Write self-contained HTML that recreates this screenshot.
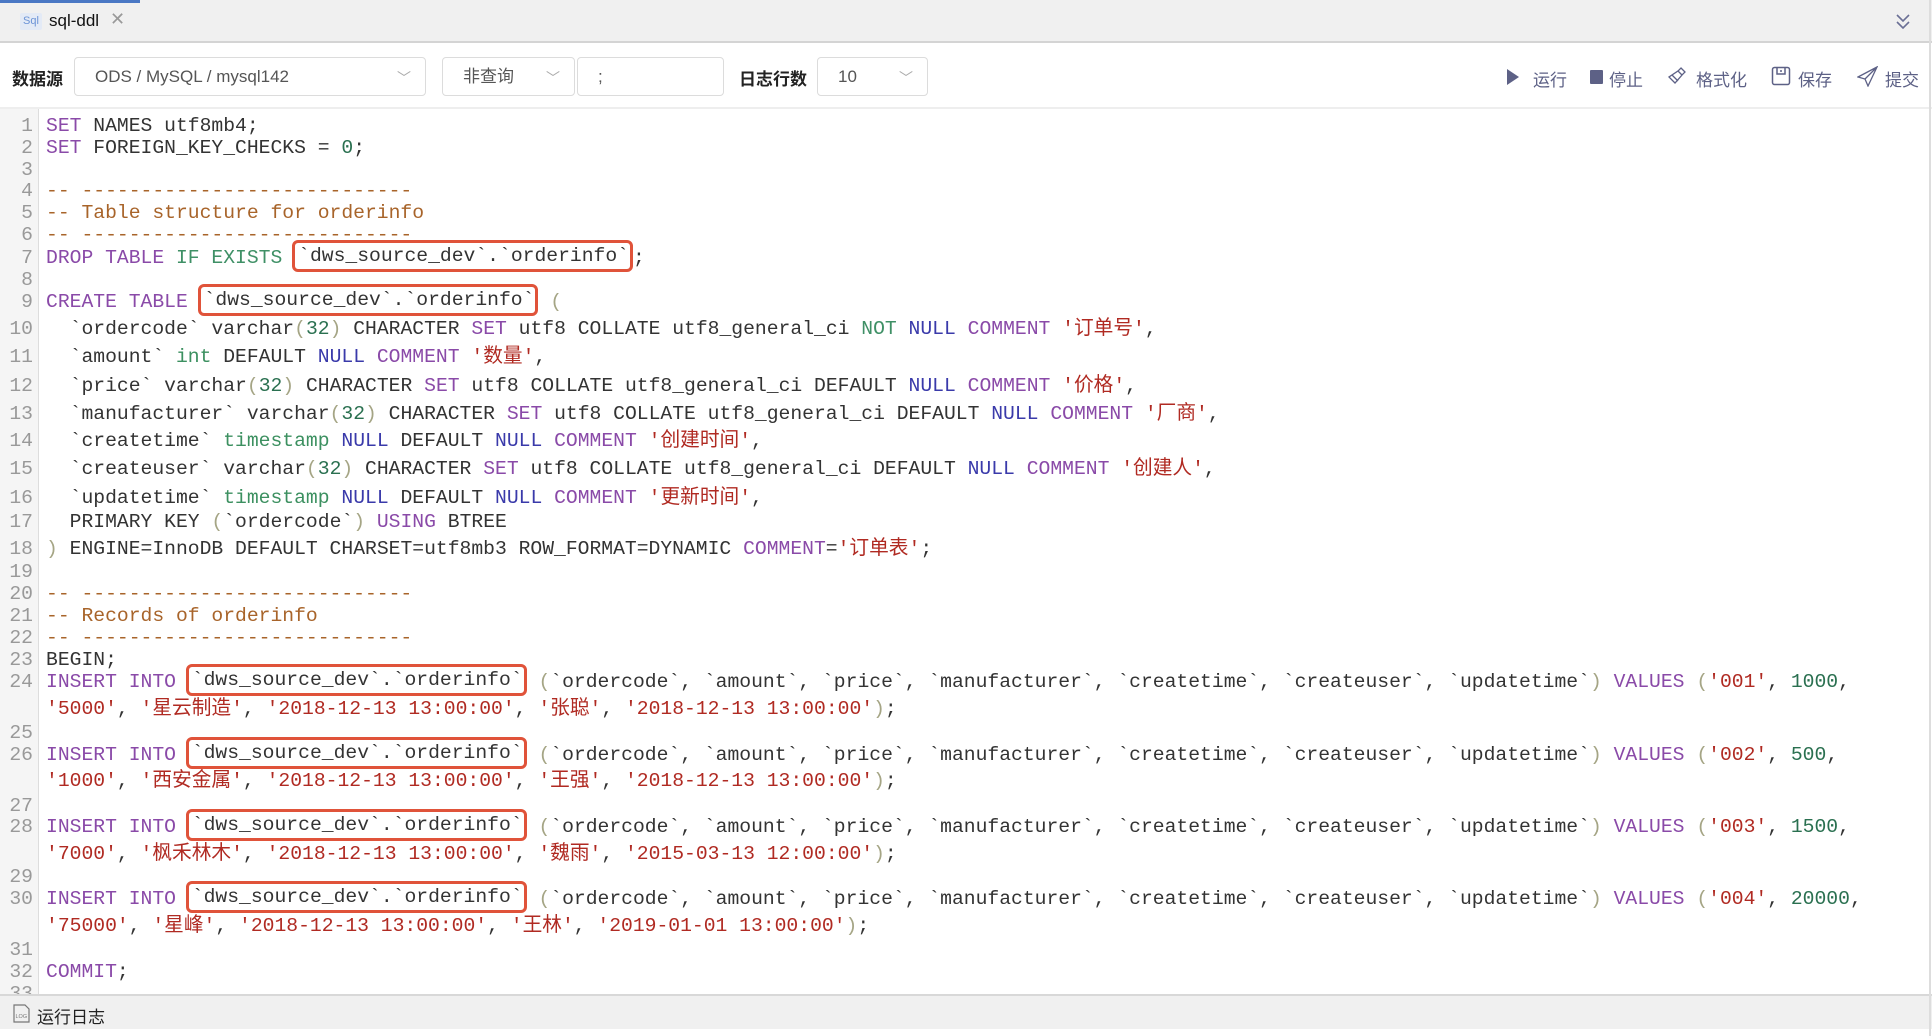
<!DOCTYPE html>
<html><head><meta charset="utf-8"><style>
*{margin:0;padding:0;box-sizing:border-box}
body{width:1932px;height:1036px;overflow:hidden;background:#fff;position:relative;font-family:"Liberation Sans","Noto Sans CJK SC",sans-serif;}
.tabbar{position:absolute;left:0;top:0;width:1932px;height:43px;background:#f0f0f0;border-bottom:2px solid #d4d4d4}
.stripe{position:absolute;left:0;top:0;width:140px;height:3px;background:#4a78c4}
.sqlic{position:absolute;left:20px;top:13px;width:22px;height:17px;background:#e3eaf6;color:#6b93d6;font-size:11px;text-align:center;line-height:17px;border-radius:2px}
.tabt{position:absolute;left:49px;top:11px;font-size:17px;color:#111}
.tabx{position:absolute;left:110px;top:9px;font-size:18px;color:#999}
.toolbar{position:absolute;left:0;top:43px;width:1932px;height:66px;border-bottom:2px solid #eee}
.lbl{position:absolute;top:22px;font-size:17px;color:#222}
.sel{position:absolute;top:14px;height:39px;border:1px solid #dcdcdc;border-radius:4px;font-size:17px;color:#555;padding-left:20px;line-height:37px}
.sel .ar{position:absolute;right:14px;top:2px;color:#aaa;font-size:14px}
.act{position:absolute;top:23px;font-size:17px;color:#5d6186}
.gut{position:absolute;left:0;top:109px;width:39px;height:885px;background:#f5f5f5;border-right:1px solid #ddd}
.code{position:absolute;left:0;top:0;width:1932px;height:994px;overflow:hidden}
.l,.n{position:absolute;height:28px;line-height:28px;font-family:"Liberation Mono","Noto Sans CJK SC",monospace;font-size:19.7px;white-space:pre;color:#333}
.l{left:46px}
.n{left:0;width:33px;text-align:right;color:#999}
.k{color:#8a4aa8}.a{color:#3a3aaa}.t{color:#3c9060}.g{color:#3f9066}.u{color:#2a7050}.s{color:#b02a22}.c{color:#a8642a}.b{color:#a5a585}
.bx{display:inline-block;border:3px solid #e0533a;border-radius:6px;padding:0 1px 0 3px;margin-left:-2px;line-height:26px;height:32px;vertical-align:middle;margin-top:-4px}
.bot{position:absolute;left:0;top:994px;width:1932px;height:35px;background:#f0f0f0;border-top:2px solid #d8d8d8}
.rline{position:absolute;left:1929px;top:0;width:2px;height:1036px;background:#ddd}
</style></head><body>
<div class="tabbar"><div class="stripe"></div><div class="sqlic">Sql</div><div class="tabt">sql-ddl</div><div class="tabx">✕</div>
<svg style="position:absolute;left:1895px;top:12px" width="16" height="20" viewBox="0 0 16 20"><path d="M2 3l6 6 6-6M2 10l6 6 6-6" fill="none" stroke="#6a6f95" stroke-width="1.6"/></svg></div>
<div class="toolbar">
<div class="lbl" style="left:12px;font-weight:bold">数据源</div>
<div class="sel" style="left:74px;width:352px">ODS / MySQL / mysql142<span class="ar">﹀</span></div>
<div class="sel" style="left:442px;width:133px">非查询<span class="ar">﹀</span></div>
<div class="sel" style="left:577px;width:147px">;</div>
<div class="lbl" style="left:739px;font-weight:bold">日志行数</div>
<div class="sel" style="left:817px;width:111px">10<span class="ar">﹀</span></div>
<svg style="position:absolute;left:1506px;top:25px" width="14" height="18"><path d="M1 1L13 9L1 17Z" fill="#5d6186"/></svg>
<div class="act" style="left:1533px">运行</div>
<div style="position:absolute;left:1590px;top:27px;width:13px;height:14px;background:#5d6186;border-radius:1px"></div>
<div class="act" style="left:1609px">停止</div>
<svg style="position:absolute;left:1667px;top:23px" width="20" height="20" viewBox="0 0 20 20"><path d="M14 2l4 4-3 3-4-4zM11 5l4 4-7 8-6-6z M5 9l6 6" fill="none" stroke="#5d6186" stroke-width="1.3"/></svg>
<div class="act" style="left:1696px">格式化</div>
<svg style="position:absolute;left:1771px;top:23px" width="20" height="20" viewBox="0 0 20 20"><rect x="1.5" y="1.5" width="17" height="17" rx="2" fill="none" stroke="#5d6186" stroke-width="1.5"/><path d="M6 2v6h8V2M10 4v2" fill="none" stroke="#5d6186" stroke-width="1.5"/></svg>
<div class="act" style="left:1798px">保存</div>
<svg style="position:absolute;left:1857px;top:23px" width="21" height="21" viewBox="0 0 21 21"><path d="M20 1L1 11l7 2 3 7zM20 1L8 13" fill="none" stroke="#5d6186" stroke-width="1.3"/></svg>
<div class="act" style="left:1885px">提交</div>
</div>
<div class="gut"></div>
<div class="code">
<div class="n" style="top:112px">1</div><div class="l" style="top:112px"><span class="k">SET</span> NAMES utf8mb4;</div>
<div class="n" style="top:134px">2</div><div class="l" style="top:134px"><span class="k">SET</span> FOREIGN_KEY_CHECKS = <span class="u">0</span>;</div>
<div class="n" style="top:156px">3</div>
<div class="n" style="top:177px">4</div><div class="l c" style="top:177px">-- ----------------------------</div>
<div class="n" style="top:199px">5</div><div class="l c" style="top:199px">-- Table structure for orderinfo</div>
<div class="n" style="top:221px">6</div><div class="l c" style="top:221px">-- ----------------------------</div>
<div class="n" style="top:244px">7</div><div class="l" style="top:244px"><span class="k">DROP TABLE</span> <span class="g">IF EXISTS</span> <span class="bx">`dws_source_dev`.`orderinfo`</span>;</div>
<div class="n" style="top:266px">8</div>
<div class="n" style="top:288px">9</div><div class="l" style="top:288px"><span class="k">CREATE TABLE</span> <span class="bx">`dws_source_dev`.`orderinfo`</span> <span class="b">(</span></div>
<div class="n" style="top:315px">10</div><div class="l" style="top:315px">  `ordercode` varchar<span class="b">(</span><span class="u">32</span><span class="b">)</span> CHARACTER <span class="k">SET</span> utf8 COLLATE utf8_general_ci <span class="g">NOT</span> <span class="a">NULL</span> <span class="k">COMMENT</span> <span class="s">'订单号'</span>,</div>
<div class="n" style="top:343px">11</div><div class="l" style="top:343px">  `amount` <span class="t">int</span> DEFAULT <span class="a">NULL</span> <span class="k">COMMENT</span> <span class="s">'数量'</span>,</div>
<div class="n" style="top:372px">12</div><div class="l" style="top:372px">  `price` varchar<span class="b">(</span><span class="u">32</span><span class="b">)</span> CHARACTER <span class="k">SET</span> utf8 COLLATE utf8_general_ci DEFAULT <span class="a">NULL</span> <span class="k">COMMENT</span> <span class="s">'价格'</span>,</div>
<div class="n" style="top:400px">13</div><div class="l" style="top:400px">  `manufacturer` varchar<span class="b">(</span><span class="u">32</span><span class="b">)</span> CHARACTER <span class="k">SET</span> utf8 COLLATE utf8_general_ci DEFAULT <span class="a">NULL</span> <span class="k">COMMENT</span> <span class="s">'厂商'</span>,</div>
<div class="n" style="top:427px">14</div><div class="l" style="top:427px">  `createtime` <span class="t">timestamp</span> <span class="a">NULL</span> DEFAULT <span class="a">NULL</span> <span class="k">COMMENT</span> <span class="s">'创建时间'</span>,</div>
<div class="n" style="top:455px">15</div><div class="l" style="top:455px">  `createuser` varchar<span class="b">(</span><span class="u">32</span><span class="b">)</span> CHARACTER <span class="k">SET</span> utf8 COLLATE utf8_general_ci DEFAULT <span class="a">NULL</span> <span class="k">COMMENT</span> <span class="s">'创建人'</span>,</div>
<div class="n" style="top:484px">16</div><div class="l" style="top:484px">  `updatetime` <span class="t">timestamp</span> <span class="a">NULL</span> DEFAULT <span class="a">NULL</span> <span class="k">COMMENT</span> <span class="s">'更新时间'</span>,</div>
<div class="n" style="top:508px">17</div><div class="l" style="top:508px">  PRIMARY KEY <span class="b">(</span>`ordercode`<span class="b">)</span> <span class="k">USING</span> BTREE</div>
<div class="n" style="top:535px">18</div><div class="l" style="top:535px"><span class="b">)</span> ENGINE=InnoDB DEFAULT CHARSET=utf8mb3 ROW_FORMAT=DYNAMIC <span class="k">COMMENT</span>=<span class="s">'订单表'</span>;</div>
<div class="n" style="top:558px">19</div>
<div class="n" style="top:580px">20</div><div class="l c" style="top:580px">-- ----------------------------</div>
<div class="n" style="top:602px">21</div><div class="l c" style="top:602px">-- Records of orderinfo</div>
<div class="n" style="top:624px">22</div><div class="l c" style="top:624px">-- ----------------------------</div>
<div class="n" style="top:646px">23</div><div class="l" style="top:646px">BEGIN;</div>
<div class="n" style="top:668px">24</div><div class="l" style="top:668px"><span class="k">INSERT INTO</span> <span class="bx">`dws_source_dev`.`orderinfo`</span> <span class="b">(</span>`ordercode`, `amount`, `price`, `manufacturer`, `createtime`, `createuser`, `updatetime`<span class="b">)</span> <span class="k">VALUES</span> <span class="b">(</span><span class="s">'001'</span>, <span class="u">1000</span>,</div>
<div class="l" style="top:695px"><span class="s">'5000'</span>, <span class="s">'星云制造'</span>, <span class="s">'2018-12-13 13:00:00'</span>, <span class="s">'张聪'</span>, <span class="s">'2018-12-13 13:00:00'</span><span class="b">)</span>;</div>
<div class="n" style="top:719px">25</div>
<div class="n" style="top:741px">26</div><div class="l" style="top:741px"><span class="k">INSERT INTO</span> <span class="bx">`dws_source_dev`.`orderinfo`</span> <span class="b">(</span>`ordercode`, `amount`, `price`, `manufacturer`, `createtime`, `createuser`, `updatetime`<span class="b">)</span> <span class="k">VALUES</span> <span class="b">(</span><span class="s">'002'</span>, <span class="u">500</span>,</div>
<div class="l" style="top:767px"><span class="s">'1000'</span>, <span class="s">'西安金属'</span>, <span class="s">'2018-12-13 13:00:00'</span>, <span class="s">'王强'</span>, <span class="s">'2018-12-13 13:00:00'</span><span class="b">)</span>;</div>
<div class="n" style="top:792px">27</div>
<div class="n" style="top:813px">28</div><div class="l" style="top:813px"><span class="k">INSERT INTO</span> <span class="bx">`dws_source_dev`.`orderinfo`</span> <span class="b">(</span>`ordercode`, `amount`, `price`, `manufacturer`, `createtime`, `createuser`, `updatetime`<span class="b">)</span> <span class="k">VALUES</span> <span class="b">(</span><span class="s">'003'</span>, <span class="u">1500</span>,</div>
<div class="l" style="top:840px"><span class="s">'7000'</span>, <span class="s">'枫禾林木'</span>, <span class="s">'2018-12-13 13:00:00'</span>, <span class="s">'魏雨'</span>, <span class="s">'2015-03-13 12:00:00'</span><span class="b">)</span>;</div>
<div class="n" style="top:863px">29</div>
<div class="n" style="top:885px">30</div><div class="l" style="top:885px"><span class="k">INSERT INTO</span> <span class="bx">`dws_source_dev`.`orderinfo`</span> <span class="b">(</span>`ordercode`, `amount`, `price`, `manufacturer`, `createtime`, `createuser`, `updatetime`<span class="b">)</span> <span class="k">VALUES</span> <span class="b">(</span><span class="s">'004'</span>, <span class="u">20000</span>,</div>
<div class="l" style="top:912px"><span class="s">'75000'</span>, <span class="s">'星峰'</span>, <span class="s">'2018-12-13 13:00:00'</span>, <span class="s">'王林'</span>, <span class="s">'2019-01-01 13:00:00'</span><span class="b">)</span>;</div>
<div class="n" style="top:936px">31</div>
<div class="n" style="top:958px">32</div><div class="l" style="top:958px"><span class="k">COMMIT</span>;</div>
<div class="n" style="top:980px">33</div>
</div>
<div class="bot">
<svg style="position:absolute;left:13px;top:8px" width="17" height="19" viewBox="0 0 17 19"><path d="M1 1h11l4 4v13H1z" fill="none" stroke="#777" stroke-width="1.2"/><text x="2.5" y="14" font-size="5.5" fill="#777" font-family="Liberation Sans">LOG</text></svg>
<div style="position:absolute;left:37px;top:7px;font-size:17px;color:#222">运行日志</div>
</div>
<div class="rline"></div>
</body></html>
